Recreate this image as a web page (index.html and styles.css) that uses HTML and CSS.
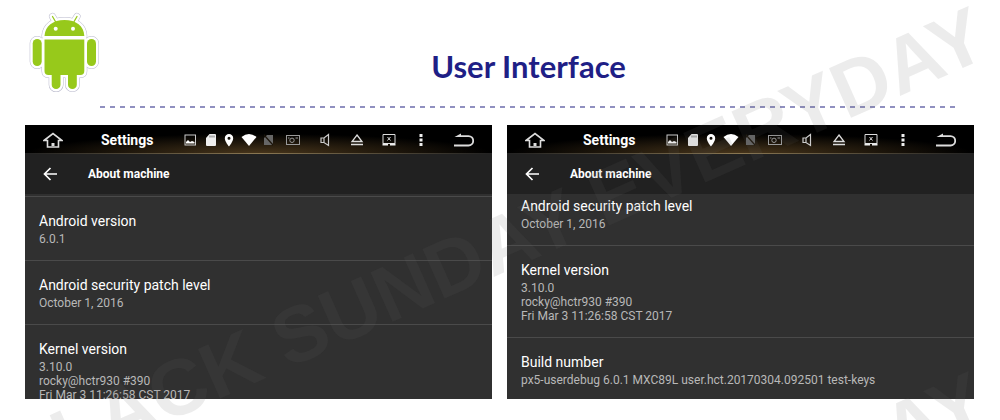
FILE: index.html
```html
<!DOCTYPE html>
<html lang="en">
<head>
    <meta charset="UTF-8">
    <meta name="viewport" content="width=device-width, initial-scale=1.0">
    <title>User Interface</title>
    <link rel="stylesheet" href="styles.css">
</head>
<body>
    <!-- icons shared by both screens -->
    <svg class="sprite" width="0" height="0" aria-hidden="true">
        <symbol id="home" viewBox="0 0 20 16">
            <path d="M1 8.500L10 1.500l9 7h-3.500V15h-11V8.500z" fill="none" stroke="#ddd" stroke-width="1.600"/>
            <path d="M8.500 11h3v3h-3z" fill="#ddd"/>
        </symbol>
        <symbol id="picture" viewBox="0 0 14 14">
            <rect x="2" y="2" width="10.500" height="10" fill="none" stroke="#ccc" stroke-width="1"/>
            <path d="M3 10.500V9l2-2 2 2 2-1 2.500 1v1.500z" fill="#fff"/>
        </symbol>
        <symbol id="sdcard" viewBox="0 0 13 14">
            <path d="M5.500 1H11q1 0 1 1v10q0 1-1 1H3q-1 0-1-1V5z" fill="#eee"/>
            <path d="M6 2.500v2M8 2.500v2M10 2.500v2" stroke="#333" stroke-width=".7"/>
        </symbol>
        <symbol id="pin" viewBox="0 0 10 14">
            <path d="M5 1a4.200 4.200 0 0 0-4.200 4.200C.8 8.500 5 13.500 5 13.500s4.200-5 4.200-8.300A4.200 4.200 0 0 0 5 1zm0 2.700a1.500 1.500 0 1 1 0 3 1.500 1.500 0 0 1 0-3z" fill="#fff"/>
        </symbol>
        <symbol id="wifi" viewBox="0 0 16 14">
            <path d="M.5 4Q8-2 15.500 4L8 13z" fill="#fff"/>
        </symbol>
        <symbol id="nosim" viewBox="0 0 9 14">
            <path d="M3 2h6v10H0V5z" fill="#666"/>
            <path d="M-.5 1.500l10 11" stroke="#1c150b" stroke-width="1.300"/>
        </symbol>
        <symbol id="camera" viewBox="0 0 16 14">
            <rect x="1.500" y="2.500" width="13" height="9" fill="none" stroke="#999"/>
            <circle cx="7" cy="7.300" r="2.200" fill="none" stroke="#999"/>
            <path d="M3 5h1.500M10.500 5h2.500" stroke="#999"/>
        </symbol>
        <symbol id="speaker" viewBox="0 0 16 14">
            <path d="M4 5h3l4.500-3.500v11L7 9.500H4z M7 5v4.500" fill="none" stroke="#ccc" stroke-width="1.200"/>
        </symbol>
        <symbol id="eject" viewBox="0 0 16 14">
            <path d="M8 2l5 6.500H3z M2 11.500h12" fill="none" stroke="#ddd" stroke-width="1.300"/>
        </symbol>
        <symbol id="screenoff" viewBox="0 0 16 14">
            <path d="M2 1.500h12v9H2z M6.500 4l3 3.500M9.500 4l-3 3.500" fill="none" stroke="#ddd"/>
            <path d="M1.500 10.500h5.500v2h-5.500zM9 10.500h5.500v2H9z" fill="#eee"/>
        </symbol>
        <symbol id="more" viewBox="0 0 16 14">
            <path d="M6.500 1h3v3h-3zM6.500 5.500h3v3h-3zM6.500 10h3v3h-3z" fill="#eee"/>
        </symbol>
        <symbol id="return" viewBox="0 0 20 16">
            <path d="M0 13.500h14.500a4.700 4.700 0 0 0 0-9.400H4" fill="none" stroke="#ddd" stroke-width="1.800"/>
            <path d="M.5 5L7 1.500V5z" fill="#ddd"/>
        </symbol>
        <symbol id="arrow" viewBox="0 0 14 14">
            <path d="M14 7H1.500M7.500 1L1.500 7l6 6" fill="none" stroke="#fff" stroke-width="1.700"/>
        </symbol>
    </svg>

    <header class="header">
        <svg class="logo" viewBox="0 0 72 84" role="img" aria-label="Android">
            <defs>
                <g id="robot">
                    <path d="M16.500 26C17 16 25 10 36.500 10S56 16 56.300 26z"/>
                    <path d="M16.500 29.500h39.800V61q0 4-4 4H20.500q-4 0-4-4z"/>
                    <rect x="4.700" y="29" width="9" height="27" rx="4.500"/>
                    <rect x="59" y="29" width="9" height="27" rx="4.500"/>
                    <path d="M23.700 62h8.800v12.700a4.400 4.400 0 0 1-8.800 0zM40 62h8.800v12.700a4.400 4.400 0 0 1-8.800 0z"/>
                </g>
                <path id="antennae" d="M24.500 6.500l3.500 6M49 6.500l-3.500 6"/>
            </defs>
            <g stroke-linejoin="round" stroke-linecap="round" fill="none">
                <use href="#robot" stroke="#b9b9cc" stroke-width="6"/>
                <use href="#antennae" stroke="#b9b9cc" stroke-width="7"/>
                <use href="#robot" stroke="#fff" stroke-width="5"/>
                <use href="#antennae" stroke="#fff" stroke-width="6"/>
                <use href="#antennae" stroke="#97c91b" stroke-width="1.300"/>
            </g>
            <use href="#robot" fill="#97c91b"/>
            <circle cx="27.700" cy="18.700" r="2" fill="#fff"/>
            <circle cx="45" cy="18.700" r="2" fill="#fff"/>
        </svg>
        <h1 class="title">User Interface</h1>
    </header>

    <main class="screens">
        <section class="screen">
            <div class="statusbar">
                <button class="home" aria-label="Home"><svg width="20" height="16"><use href="#home"/></svg></button>
                <span class="app-name">Settings</span>
                <div class="notifications">
                    <svg width="14" height="14"><use href="#picture"/></svg>
                    <svg width="13" height="14"><use href="#sdcard"/></svg>
                    <svg width="10" height="14"><use href="#pin"/></svg>
                    <svg width="16" height="14"><use href="#wifi"/></svg>
                    <svg width="9" height="14"><use href="#nosim"/></svg>
                </div>
                <div class="actions">
                    <button aria-label="Screenshot"><svg width="16" height="14"><use href="#camera"/></svg></button>
                    <button aria-label="Volume"><svg width="16" height="14"><use href="#speaker"/></svg></button>
                    <button aria-label="Eject"><svg width="16" height="14"><use href="#eject"/></svg></button>
                    <button aria-label="Screen off"><svg width="16" height="14"><use href="#screenoff"/></svg></button>
                    <button aria-label="More"><svg width="16" height="14"><use href="#more"/></svg></button>
                </div>
                <button class="return" aria-label="Return"><svg width="20" height="16"><use href="#return"/></svg></button>
            </div>
            <div class="appbar">
                <button aria-label="Back"><svg width="14" height="14"><use href="#arrow"/></svg></button>
                <h2>About machine</h2>
            </div>
            <dl class="list">
                <div class="item">
                    <dt>Android version</dt>
                    <dd>6.0.1</dd>
                </div>
                <div class="item">
                    <dt>Android security patch level</dt>
                    <dd>October 1, 2016</dd>
                </div>
                <div class="item">
                    <dt>Kernel version</dt>
                    <dd>3.10.0<br>rocky@hctr930 #390<br>Fri Mar 3 11:26:58 CST 2017</dd>
                </div>
            </dl>
        </section>

        <section class="screen">
            <div class="statusbar">
                <button class="home" aria-label="Home"><svg width="20" height="16"><use href="#home"/></svg></button>
                <span class="app-name">Settings</span>
                <div class="notifications">
                    <svg width="14" height="14"><use href="#picture"/></svg>
                    <svg width="13" height="14"><use href="#sdcard"/></svg>
                    <svg width="10" height="14"><use href="#pin"/></svg>
                    <svg width="16" height="14"><use href="#wifi"/></svg>
                    <svg width="9" height="14"><use href="#nosim"/></svg>
                </div>
                <div class="actions">
                    <button aria-label="Screenshot"><svg width="16" height="14"><use href="#camera"/></svg></button>
                    <button aria-label="Volume"><svg width="16" height="14"><use href="#speaker"/></svg></button>
                    <button aria-label="Eject"><svg width="16" height="14"><use href="#eject"/></svg></button>
                    <button aria-label="Screen off"><svg width="16" height="14"><use href="#screenoff"/></svg></button>
                    <button aria-label="More"><svg width="16" height="14"><use href="#more"/></svg></button>
                </div>
                <button class="return" aria-label="Return"><svg width="20" height="16"><use href="#return"/></svg></button>
            </div>
            <div class="appbar">
                <button aria-label="Back"><svg width="14" height="14"><use href="#arrow"/></svg></button>
                <h2>About machine</h2>
            </div>
            <dl class="list scrolled">
                <div class="item">
                    <dt>Android security patch level</dt>
                    <dd>October 1, 2016</dd>
                </div>
                <div class="item">
                    <dt>Kernel version</dt>
                    <dd>3.10.0<br>rocky@hctr930 #390<br>Fri Mar 3 11:26:58 CST 2017</dd>
                </div>
                <div class="item">
                    <dt>Build number</dt>
                    <dd>px5-userdebug 6.0.1 MXC89L user.hct.20170304.092501 test-keys</dd>
                </div>
            </dl>
        </section>
    </main>

    <svg class="watermark" viewBox="0 0 1000 420" preserveAspectRatio="xMidYMin slice" aria-hidden="true">
        <text text-anchor="end" transform="translate(992 55) rotate(-24)">BLACK SUNDAY EVERYDAY</text>
        <text text-anchor="end" transform="translate(992 420) rotate(-24)">BLACK SUNDAY EVERYDAY</text>
    </svg>
</body>
</html>
```
FILE: styles.css
```css
* {
    margin: 0;
    padding: 0;
    box-sizing: border-box;
}

body {
    position: relative;
    min-height: 100vh;
    background-color: #fff;
    font-family: Roboto, sans-serif;
    overflow: hidden;
}

button {
    display: flex;
    justify-content: center;
    align-items: center;
    background: none;
    border: none;
    cursor: pointer;
}

svg {
    display: block;
}

.sprite {
    position: absolute;
}

.header {
    display: flex;
    align-items: flex-end;
    padding: 10px 43px 0 28px;
}

.logo {
    width: 72px;
    height: 84px;
    margin-bottom: 14px;
}

.title {
    flex: 1;
    height: 66px;
    padding-top: 6px;
    color: #1f1f86;
    font-family: Lato, sans-serif;
    font-size: 31px;
    line-height: 36px;
    text-align: center;
    /* dashed rule under the title */
    background: repeating-linear-gradient(to right, #9090c0 0 5px, transparent 5px 10px) bottom / 100% 2px no-repeat;
}

.screens {
    display: grid;
    grid-template-columns: 1fr 1fr;
    gap: 15px;
    padding: 17px 26px 0 25px;
}

.screen {
    aspect-ratio: 467 / 274;
    min-height: 0;
    overflow: hidden;
    background-color: #303030;
    color: #fff;
}

.statusbar {
    display: flex;
    align-items: center;
    height: 29px;
    padding: 0 18px;
    background:
        linear-gradient(to right, #222, #8a7752 50%, #222) bottom / 100% 1px no-repeat,
        radial-gradient(ellipse 50% 70% at 50% 100%, #4a371c, #000) #000;
}

.app-name {
    width: 82px;
    margin-left: 38px;
    font-size: 14px;
    font-weight: bold;
}

.notifications {
    display: flex;
    gap: 7px;
}

.actions {
    display: flex;
    gap: 8px;
    margin-left: 8px;
}

.actions button {
    width: 24px;
}

.return {
    margin-left: auto;
}

.appbar {
    display: flex;
    align-items: center;
    gap: 31px;
    height: 40px;
    padding-left: 18px;
    background-color: #212121;
}

.appbar h2 {
    font-size: 12px;
    font-weight: bold;
}

.list {
    padding-top: 2px;
}

.item {
    padding: 15px 14px 14px;
    border-top: 1px solid #4a4a4a;
}

.item dt {
    margin-bottom: 2px;
    font-size: 14px;
    line-height: 18px;
}

.item dd {
    color: #b8b8b8;
    font-size: 12px;
    line-height: 14px;
}

.scrolled {
    padding-top: 0;
}

.scrolled .item:first-child {
    padding-top: 3px;
    border-top: none;
}

.watermark {
    position: absolute;
    top: 0;
    left: 0;
    width: 100%;
    height: 100%;
    pointer-events: none;
    fill: rgba(100, 100, 100, 0.12);
    font-family: "Liberation Sans", sans-serif;
    font-size: 79px;
    font-weight: bold;
}
```
